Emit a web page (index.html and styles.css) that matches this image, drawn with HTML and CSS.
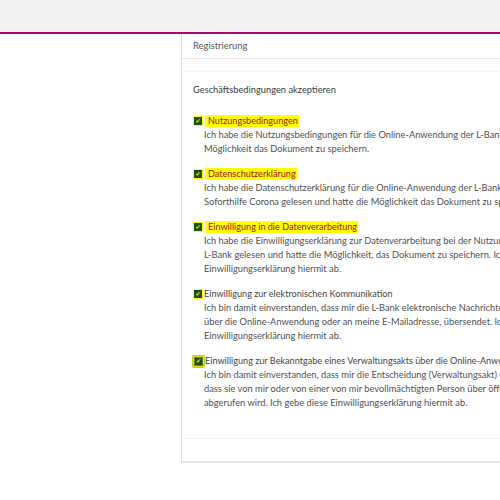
FILE: index.html
```html
<!DOCTYPE html>
<html lang="de">
<head>
<meta charset="utf-8">
<link rel="stylesheet" href="styles.css">
</head>
<body>
<div class="topbar"></div>
<div class="layout">
  <div class="card">
    <div class="card-header">Registrierung</div>
    <div class="card-band"></div>
    <div class="card-body">
      <div class="section-title">Geschäftsbedingungen akzeptieren</div>

      <div class="item">
        <div class="item-head"><span class="cb hl"><span class="box">✔</span></span><span class="title mark">Nutzungsbedingungen</span></div>
        <div class="desc">Ich habe die Nutzungsbedingungen für die Online-Anwendung der L-Bank gelesen und hatte die<br>Möglichkeit das Dokument zu speichern.</div>
      </div>

      <div class="item">
        <div class="item-head"><span class="cb hl"><span class="box">✔</span></span><span class="title mark">Datenschutzerklärung</span></div>
        <div class="desc">Ich habe die Datenschutzerklärung für die Online-Anwendung der L-Bank zur<br>Soforthilfe Corona gelesen und hatte die Möglichkeit das Dokument zu speichern.</div>
      </div>

      <div class="item">
        <div class="item-head"><span class="cb hl"><span class="box">✔</span></span><span class="title mark">Einwilligung in die Datenverarbeitung</span></div>
        <div class="desc">Ich habe die Einwilligungserklärung zur Datenverarbeitung bei der Nutzung der Online-Anwendung der<br>L-Bank gelesen und hatte die Möglichkeit, das Dokument zu speichern. Ich gebe diese<br>Einwilligungserklärung hiermit ab.</div>
      </div>

      <div class="item">
        <div class="item-head"><span class="cb hl"><span class="box">✔</span></span><span class="title plain">Einwilligung zur elektronischen Kommunikation</span></div>
        <div class="desc">Ich bin damit einverstanden, dass mir die L-Bank elektronische Nachrichten<br>über die Online-Anwendung oder an meine E-Mailadresse, übersendet. Ich gebe diese<br>Einwilligungserklärung hiermit ab.</div>
      </div>

      <div class="item">
        <div class="item-head"><span class="cb hl focus"><span class="box">✔</span></span><span class="title plain">Einwilligung zur Bekanntgabe eines Verwaltungsakts über die Online-Anwendung</span></div>
        <div class="desc">Ich bin damit einverstanden, dass mir die Entscheidung (Verwaltungsakt) dadurch bekannt gegeben wird,<br>dass sie von mir oder von einer von mir bevollmächtigten Person über öffentlich zugängliche Netze<br>abgerufen wird. Ich gebe diese Einwilligungserklärung hiermit ab.</div>
      </div>
    </div>
    <div class="card-footer"></div>
  </div>
</div>
</body>
</html>
```
FILE: styles.css
```css
html, body {
  margin: 0;
  padding: 0;
  background: #ffffff;
  overflow: hidden;
}
body {
  font-family: "Lato", "DejaVu Sans", sans-serif;
  font-size: 9.3px;
  color: #505050;
}
.topbar {
  height: 32px;
  background: #f2f2f2;
  border-bottom: 2px solid #9c0a72;
}
.layout {
  display: flex;
  padding-left: 181px;
  overflow: hidden;
}
.card {
  flex: 0 0 auto;
  width: 560px;
  border-left: 1px solid #dcdcdc;
  border-bottom: 2px solid #e4e4e4;
  background: #fff;
}
.card-header {
  height: 24px;
  line-height: 24px;
  padding-left: 11px;
  border-bottom: 1px solid #e8e8e8;
  color: #555;
  font-size: 9.4px;
}
.card-band {
  height: 12px;
  background: #fcfcfc;
  border-bottom: 1px solid #f4f4f4;
}
.card-body {
  padding: 11px 0 28px 11px;
  line-height: 14px;
}
.section-title {
  font-size: 9.3px;
  color: #3a3a3a;
  margin-bottom: 17px;
}
.item {
  margin-bottom: 11px;
}
.item:last-child {
  margin-bottom: 0;
}
.item-head {
  display: flex;
  align-items: center;
  height: 14px;
}
.cb {
  display: inline-flex;
  align-items: center;
  justify-content: center;
  width: 10px;
  height: 10px;
  margin-right: 1px;
}
.cb.hl {
  background: #ffff00;
}
.cb.focus {
  width: 11px;
  height: 11px;
  background: #e6e600;
  border-radius: 1px;
  box-shadow: 0 0 0 1px #b8c832;
}
.box {
  display: flex;
  align-items: center;
  justify-content: center;
  width: 8px;
  height: 8px;
  background: #1f4f12;
  color: #f4f000;
  font-size: 6px;
  line-height: 8px;
  font-family: "DejaVu Sans", sans-serif;
}
.focus .box {
  width: 9px;
  height: 9px;
  border: 1px solid #6a7c20;
  box-sizing: border-box;
}
.title {
  white-space: nowrap;
  font-size: 9.1px;
  line-height: 12px;
}
.title.mark {
  background: #ffff00;
  color: #a0102a;
  padding: 0 1px 0 3px;
  margin-left: 1px;
}
.title.plain {
  color: #444;
}
.desc {
  padding-left: 11px;
  white-space: nowrap;
  color: #505050;
}
.card-footer {
  height: 22px;
  border-top: 1px solid #f2f2f2;
}
```
